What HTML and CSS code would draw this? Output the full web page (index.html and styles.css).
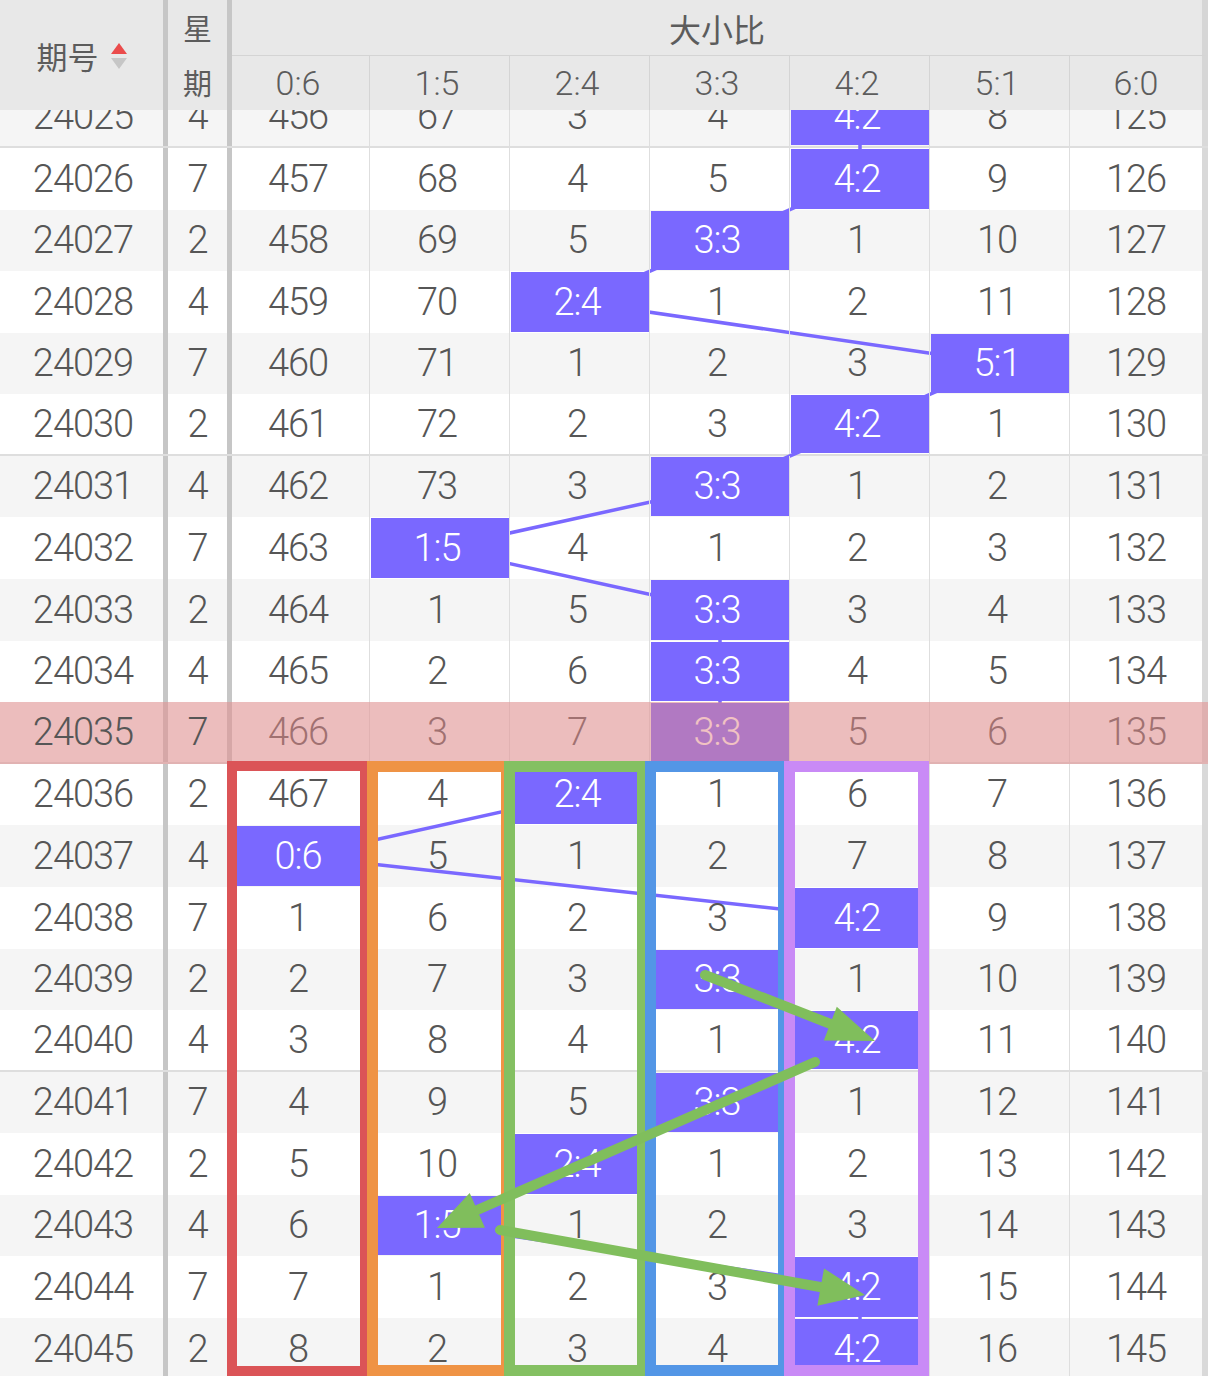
FILE: index.html
```html
<!DOCTYPE html>
<html lang="zh-CN">
<head>
<meta charset="utf-8">
<title>大小比走势</title>
<link rel="stylesheet" href="styles.css">
</head>
<body>
<div class="page">
  <div class="thead">
    <div class="h-no"><span>期号</span>
      <svg class="sort" width="16" height="27" viewBox="0 0 16 27"><polygon points="8,0 16,11 0,11" fill="#ea4b4b"/><polygon points="0,15 16,15 8,26" fill="#c6c6c6"/></svg>
    </div>
    <div class="h-wk"><span>星</span><span>期</span></div>
    <div class="h-group">大小比</div>
    <div class="h-col">0:6</div>
    <div class="h-col">1:5</div>
    <div class="h-col">2:4</div>
    <div class="h-col">3:3</div>
    <div class="h-col">4:2</div>
    <div class="h-col">5:1</div>
    <div class="h-col last">6:0</div>
  </div>

  <div class="scroll">
  <div class="tbody">
    <div class="row alt sep"><div class="no"><span>24025</span></div><div class="wk"><span>4</span></div><div class="c">456</div><div class="c">67</div><div class="c">3</div><div class="c">4</div><div class="c hit">4:2</div><div class="c">8</div><div class="c last">125</div></div>
    <div class="row"><div class="no"><span>24026</span></div><div class="wk"><span>7</span></div><div class="c">457</div><div class="c">68</div><div class="c">4</div><div class="c">5</div><div class="c hit">4:2</div><div class="c">9</div><div class="c last">126</div></div>
    <div class="row alt"><div class="no"><span>24027</span></div><div class="wk"><span>2</span></div><div class="c">458</div><div class="c">69</div><div class="c">5</div><div class="c hit">3:3</div><div class="c">1</div><div class="c">10</div><div class="c last">127</div></div>
    <div class="row"><div class="no"><span>24028</span></div><div class="wk"><span>4</span></div><div class="c">459</div><div class="c">70</div><div class="c hit">2:4</div><div class="c">1</div><div class="c">2</div><div class="c">11</div><div class="c last">128</div></div>
    <div class="row alt"><div class="no"><span>24029</span></div><div class="wk"><span>7</span></div><div class="c">460</div><div class="c">71</div><div class="c">1</div><div class="c">2</div><div class="c">3</div><div class="c hit">5:1</div><div class="c last">129</div></div>
    <div class="row sep"><div class="no"><span>24030</span></div><div class="wk"><span>2</span></div><div class="c">461</div><div class="c">72</div><div class="c">2</div><div class="c">3</div><div class="c hit">4:2</div><div class="c">1</div><div class="c last">130</div></div>
    <div class="row alt"><div class="no"><span>24031</span></div><div class="wk"><span>4</span></div><div class="c">462</div><div class="c">73</div><div class="c">3</div><div class="c hit">3:3</div><div class="c">1</div><div class="c">2</div><div class="c last">131</div></div>
    <div class="row"><div class="no"><span>24032</span></div><div class="wk"><span>7</span></div><div class="c">463</div><div class="c hit">1:5</div><div class="c">4</div><div class="c">1</div><div class="c">2</div><div class="c">3</div><div class="c last">132</div></div>
    <div class="row alt"><div class="no"><span>24033</span></div><div class="wk"><span>2</span></div><div class="c">464</div><div class="c">1</div><div class="c">5</div><div class="c hit">3:3</div><div class="c">3</div><div class="c">4</div><div class="c last">133</div></div>
    <div class="row"><div class="no"><span>24034</span></div><div class="wk"><span>4</span></div><div class="c">465</div><div class="c">2</div><div class="c">6</div><div class="c hit">3:3</div><div class="c">4</div><div class="c">5</div><div class="c last">134</div></div>
    <div class="row alt sep cur"><div class="no"><span>24035</span></div><div class="wk"><span>7</span></div><div class="c">466</div><div class="c">3</div><div class="c">7</div><div class="c hit">3:3</div><div class="c">5</div><div class="c">6</div><div class="c last">135</div></div>
    <div class="row"><div class="no"><span>24036</span></div><div class="wk"><span>2</span></div><div class="c">467</div><div class="c">4</div><div class="c hit">2:4</div><div class="c">1</div><div class="c">6</div><div class="c">7</div><div class="c last">136</div></div>
    <div class="row alt"><div class="no"><span>24037</span></div><div class="wk"><span>4</span></div><div class="c hit">0:6</div><div class="c">5</div><div class="c">1</div><div class="c">2</div><div class="c">7</div><div class="c">8</div><div class="c last">137</div></div>
    <div class="row"><div class="no"><span>24038</span></div><div class="wk"><span>7</span></div><div class="c">1</div><div class="c">6</div><div class="c">2</div><div class="c">3</div><div class="c hit">4:2</div><div class="c">9</div><div class="c last">138</div></div>
    <div class="row alt"><div class="no"><span>24039</span></div><div class="wk"><span>2</span></div><div class="c">2</div><div class="c">7</div><div class="c">3</div><div class="c hit">3:3</div><div class="c">1</div><div class="c">10</div><div class="c last">139</div></div>
    <div class="row sep"><div class="no"><span>24040</span></div><div class="wk"><span>4</span></div><div class="c">3</div><div class="c">8</div><div class="c">4</div><div class="c">1</div><div class="c hit">4:2</div><div class="c">11</div><div class="c last">140</div></div>
    <div class="row alt"><div class="no"><span>24041</span></div><div class="wk"><span>7</span></div><div class="c">4</div><div class="c">9</div><div class="c">5</div><div class="c hit">3:3</div><div class="c">1</div><div class="c">12</div><div class="c last">141</div></div>
    <div class="row"><div class="no"><span>24042</span></div><div class="wk"><span>2</span></div><div class="c">5</div><div class="c">10</div><div class="c hit">2:4</div><div class="c">1</div><div class="c">2</div><div class="c">13</div><div class="c last">142</div></div>
    <div class="row alt"><div class="no"><span>24043</span></div><div class="wk"><span>4</span></div><div class="c">6</div><div class="c hit">1:5</div><div class="c">1</div><div class="c">2</div><div class="c">3</div><div class="c">14</div><div class="c last">143</div></div>
    <div class="row"><div class="no"><span>24044</span></div><div class="wk"><span>7</span></div><div class="c">7</div><div class="c">1</div><div class="c">2</div><div class="c">3</div><div class="c hit">4:2</div><div class="c">15</div><div class="c last">144</div></div>
    <div class="row alt"><div class="no"><span>24045</span></div><div class="wk"><span>2</span></div><div class="c">8</div><div class="c">2</div><div class="c">3</div><div class="c">4</div><div class="c hit">4:2</div><div class="c">16</div><div class="c last">145</div></div>
  </div>
  </div>

  <svg class="lines" width="1208" height="1376" viewBox="0 0 1208 1376">
    <polyline fill="none" stroke="#7a68ff" stroke-width="3.5" stroke-linejoin="round"
      points="860,117.2 860,178.8 720,240.4 580,301.9 1000,363.5 860,425.1 720,486.7 440,548.3 720,609.8 720,671.4 720,733 580,794.6 301,856.2 860,917.7 720,979.3 860,1040.9 720,1102.5 580,1164.1 440,1225.6 860,1287.2 860,1348.8"/>
  </svg>

  <div class="frame f-red"></div>
  <div class="frame f-orange"></div>
  <div class="frame f-green"></div>
  <div class="frame f-blue"></div>
  <div class="frame f-violet"></div>

  <svg class="arrows" width="1208" height="1376" viewBox="0 0 1208 1376">
    <g stroke="#80be5c" stroke-width="10" stroke-linecap="round" fill="none">
      <line x1="705" y1="975" x2="832" y2="1024.5"/>
      <line x1="815" y1="1062" x2="475" y2="1211"/>
      <line x1="500" y1="1230" x2="823" y2="1287.5"/>
    </g>
    <g fill="#80be5c">
      <polygon points="875,1041 823.8,1040.4 836.8,1006.8"/>
      <polygon points="437,1228 484.9,1227.7 469.7,1192.9"/>
      <polygon points="865,1295 817.4,1305.8 824,1268.4"/>
    </g>
  </svg>
</div>
</body>
</html>
```

FILE: styles.css
```css
* {
  box-sizing: border-box;
  margin: 0;
  padding: 0;
}

html,
body {
  width: 1208px;
  height: 1376px;
  overflow: hidden;
  background: #ffffff;
}

body {
  font-family: Roboto, "Noto Sans", "Noto Sans CJK SC", sans-serif;
  color: #565656;
}

.page {
  position: relative;
  z-index: 0;
  width: 1208px;
  height: 1376px;
  overflow: hidden;
}

/* ---------- header ---------- */
.thead {
  position: relative;
  z-index: 10;
  display: grid;
  grid-template-columns: 168px 64px 138px repeat(5, 140px) 138px;
  grid-template-rows: 56px 54px;
  height: 110px;
  background: #e8e8e8;
  color: #5c5c5c;
}

.h-no {
  grid-row: 1 / 3;
  grid-column: 1;
  border-right: 5px solid #c6c6c6;
  display: flex;
  align-items: center;
  justify-content: center;
  gap: 12px;
  font-family: "Noto Sans CJK SC", sans-serif;
  font-size: 31px;
  line-height: 1;
}

.sort {
  display: block;
  margin-top: 2px;
}

.h-wk {
  grid-row: 1 / 3;
  grid-column: 2;
  border-right: 5px solid #c6c6c6;
  display: flex;
  flex-direction: column;
  font-family: "Noto Sans CJK SC", sans-serif;
  font-size: 29px;
  line-height: 1;
}

.h-wk span {
  height: 55px;
  display: flex;
  align-items: center;
  justify-content: center;
}

.h-group {
  grid-row: 1;
  grid-column: 3 / 10;
  border-bottom: 1px solid #d4d4d4;
  border-right: 6px solid #d6d6d6;
  display: flex;
  align-items: center;
  justify-content: center;
  font-family: "Noto Sans CJK SC", sans-serif;
  font-size: 32px;
  line-height: 1;
}

.h-col {
  grid-row: 2;
  border-right: 1px solid #d4d4d4;
  display: flex;
  align-items: center;
  justify-content: center;
  padding: 2px 5px 0 0;
  font-size: 34px;
  font-weight: 300;
  line-height: 0.8;
}

.h-col.last {
  border-right: 6px solid #d6d6d6;
  padding-right: 0;
}

/* ---------- body (scrolled area under the header) ---------- */
.scroll {
  height: 1266px;
  overflow: hidden;
}

.tbody {
  margin-top: -23.6px;
}

.row {
  display: grid;
  grid-template-columns: 168px 64px 138px repeat(5, 140px) 138px;
  height: 61.58px;
  background: #ffffff;
  font-size: 38px;
  font-weight: 300;
  line-height: 0.8;
  letter-spacing: -1px;
}

.row.alt {
  background: #f5f5f5;
}

.row.sep {
  border-bottom: 2px solid #dedede;
}

.no,
.wk {
  border-right: 5px solid #c6c6c6;
  display: flex;
  align-items: center;
  justify-content: center;
}

.no {
  padding-left: 3px;
}

.no span,
.wk span {
  position: relative;
  z-index: 4;
}

.c {
  position: relative;
  z-index: 2;
  border-right: 1px solid #dedede;
  display: flex;
  align-items: center;
  justify-content: center;
  padding-right: 5px;
}

.c.last {
  border-right: 6px solid #d9d9d9;
  padding-right: 0;
}

.c.hit {
  background-image: linear-gradient(#7a68ff, #7a68ff);
  background-repeat: no-repeat;
  background-origin: border-box;
  background-clip: border-box;
  background-position: 1px 1px;
  background-size: calc(100% - 2px) calc(100% - 2px);
  color: #ffffff;
}

.row.cur {
  position: relative;
}

.row.cur::after {
  content: "";
  position: absolute;
  left: 0;
  right: 0;
  top: 0;
  bottom: -2px;
  z-index: 3;
  background: rgba(228, 139, 139, 0.52);
}

/* ---------- overlays ---------- */
.lines {
  position: absolute;
  left: 0;
  top: 0;
  z-index: 1;
  pointer-events: none;
}

.frame {
  position: absolute;
  top: 761px;
  height: 615px;
  border: 10px solid;
  z-index: 6;
  pointer-events: none;
}

.f-red {
  left: 227px;
  width: 143px;
  border-color: #db5457;
}

.f-orange {
  left: 367px;
  width: 145px;
  border-width: 11px;
  border-color: #ef9345;
}

.f-green {
  left: 504px;
  width: 144px;
  border-width: 11px;
  border-color: #84c062;
}

.f-blue {
  left: 645px;
  width: 144px;
  border-width: 11px;
  border-color: #5396e6;
}

.f-violet {
  left: 784px;
  width: 145px;
  border-width: 11px;
  border-color: #c98af6;
}

.arrows {
  position: absolute;
  left: 0;
  top: 0;
  z-index: 7;
  pointer-events: none;
}
```
